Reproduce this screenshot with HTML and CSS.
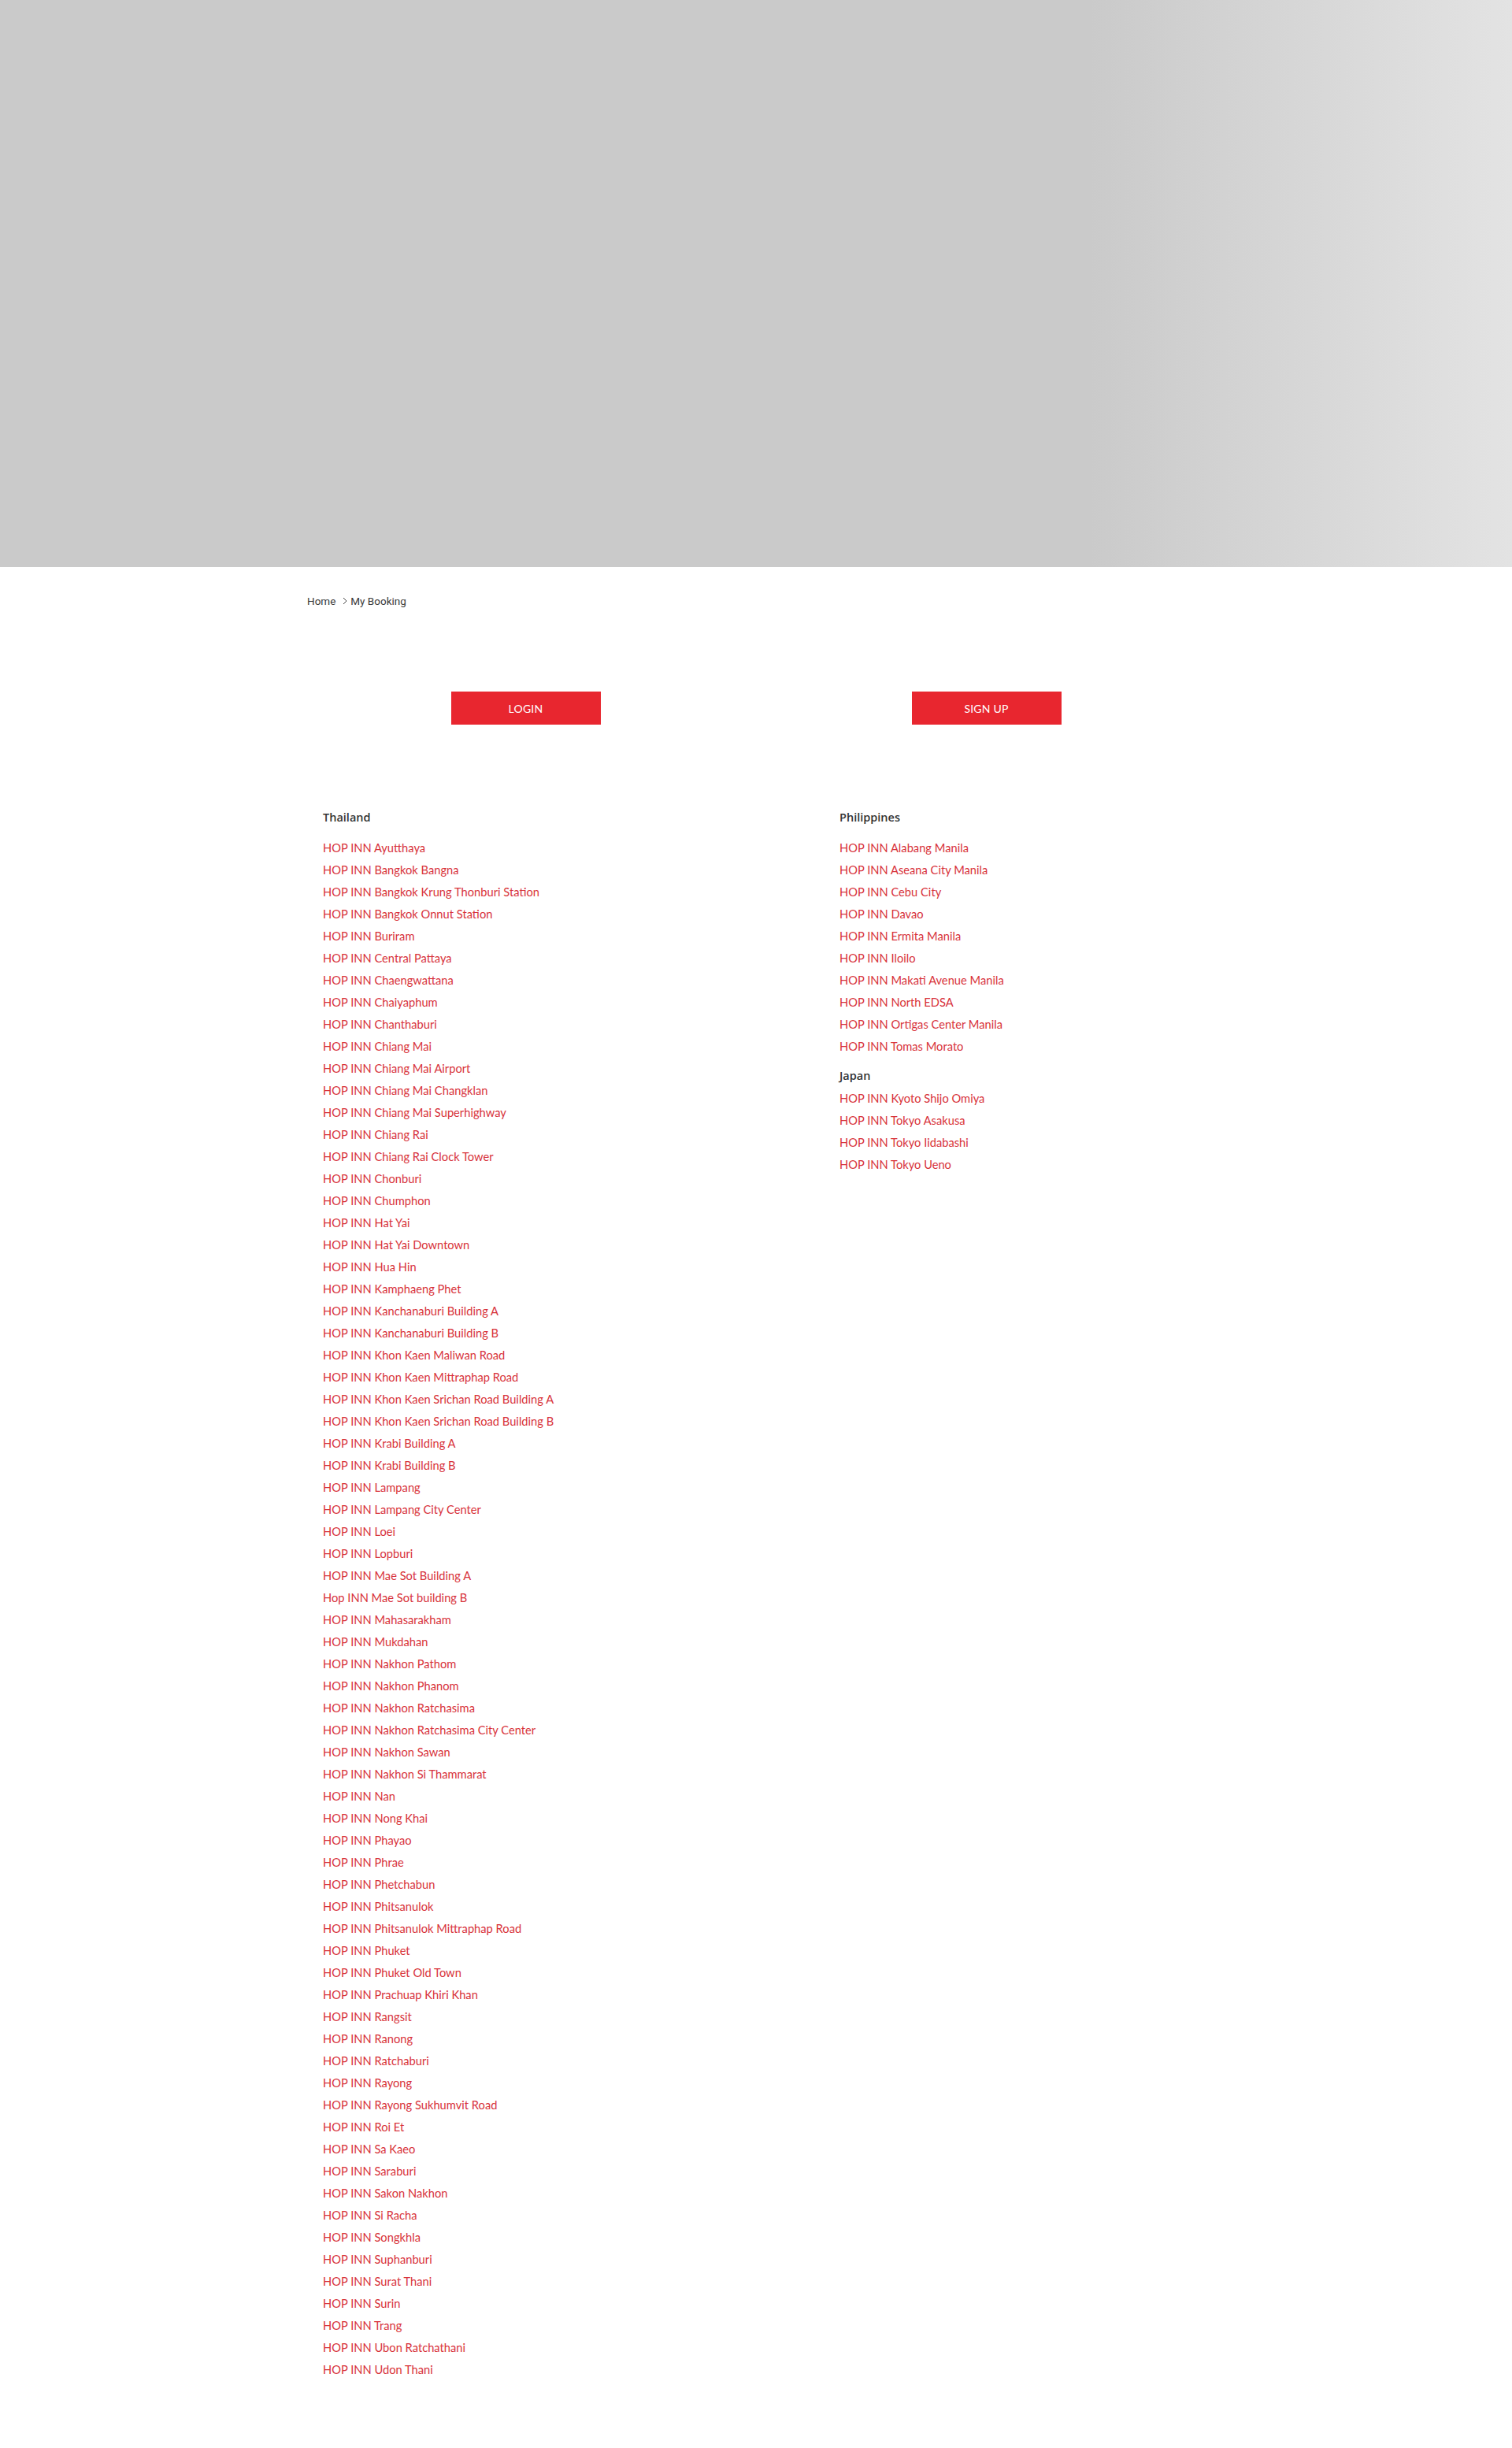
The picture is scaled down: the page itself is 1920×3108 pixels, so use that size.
FILE: index.html
```html
<!DOCTYPE html>
<html lang="en">
<head>
<meta charset="utf-8">
<title>My Booking - HOP INN</title>
<link rel="stylesheet" href="styles.css">
</head>
<body>
<header class="hero"></header>
<main class="container">
  <nav class="breadcrumb">
    <a href="#" class="crumb">Home</a>
    <svg class="chev" viewBox="0 0 6 10" width="6" height="10"><polyline points="1,1 5,5 1,9" fill="none" stroke="#444" stroke-width="1"/></svg>
    <span class="crumb current">My Booking</span>
  </nav>

  <section class="auth">
    <div class="auth-col"><a href="#" class="btn">LOGIN</a></div>
    <div class="auth-col"><a href="#" class="btn">SIGN UP</a></div>
  </section>

  <section class="hotels">
    <div class="region-col">
      <h4 class="region-title">Thailand</h4>
      <ul class="hotel-list">
        <li><a href="#">HOP INN Ayutthaya</a></li>
        <li><a href="#">HOP INN Bangkok Bangna</a></li>
        <li><a href="#">HOP INN Bangkok Krung Thonburi Station</a></li>
        <li><a href="#">HOP INN Bangkok Onnut Station</a></li>
        <li><a href="#">HOP INN Buriram</a></li>
        <li><a href="#">HOP INN Central Pattaya</a></li>
        <li><a href="#">HOP INN Chaengwattana</a></li>
        <li><a href="#">HOP INN Chaiyaphum</a></li>
        <li><a href="#">HOP INN Chanthaburi</a></li>
        <li><a href="#">HOP INN Chiang Mai</a></li>
        <li><a href="#">HOP INN Chiang Mai Airport</a></li>
        <li><a href="#">HOP INN Chiang Mai Changklan</a></li>
        <li><a href="#">HOP INN Chiang Mai Superhighway</a></li>
        <li><a href="#">HOP INN Chiang Rai</a></li>
        <li><a href="#">HOP INN Chiang Rai Clock Tower</a></li>
        <li><a href="#">HOP INN Chonburi</a></li>
        <li><a href="#">HOP INN Chumphon</a></li>
        <li><a href="#">HOP INN Hat Yai</a></li>
        <li><a href="#">HOP INN Hat Yai Downtown</a></li>
        <li><a href="#">HOP INN Hua Hin</a></li>
        <li><a href="#">HOP INN Kamphaeng Phet</a></li>
        <li><a href="#">HOP INN Kanchanaburi Building A</a></li>
        <li><a href="#">HOP INN Kanchanaburi Building B</a></li>
        <li><a href="#">HOP INN Khon Kaen Maliwan Road</a></li>
        <li><a href="#">HOP INN Khon Kaen Mittraphap Road</a></li>
        <li><a href="#">HOP INN Khon Kaen Srichan Road Building A</a></li>
        <li><a href="#">HOP INN Khon Kaen Srichan Road Building B</a></li>
        <li><a href="#">HOP INN Krabi Building A</a></li>
        <li><a href="#">HOP INN Krabi Building B</a></li>
        <li><a href="#">HOP INN Lampang</a></li>
        <li><a href="#">HOP INN Lampang City Center</a></li>
        <li><a href="#">HOP INN Loei</a></li>
        <li><a href="#">HOP INN Lopburi</a></li>
        <li><a href="#">HOP INN Mae Sot Building A</a></li>
        <li><a href="#">Hop INN Mae Sot building B</a></li>
        <li><a href="#">HOP INN Mahasarakham</a></li>
        <li><a href="#">HOP INN Mukdahan</a></li>
        <li><a href="#">HOP INN Nakhon Pathom</a></li>
        <li><a href="#">HOP INN Nakhon Phanom</a></li>
        <li><a href="#">HOP INN Nakhon Ratchasima</a></li>
        <li><a href="#">HOP INN Nakhon Ratchasima City Center</a></li>
        <li><a href="#">HOP INN Nakhon Sawan</a></li>
        <li><a href="#">HOP INN Nakhon Si Thammarat</a></li>
        <li><a href="#">HOP INN Nan</a></li>
        <li><a href="#">HOP INN Nong Khai</a></li>
        <li><a href="#">HOP INN Phayao</a></li>
        <li><a href="#">HOP INN Phrae</a></li>
        <li><a href="#">HOP INN Phetchabun</a></li>
        <li><a href="#">HOP INN Phitsanulok</a></li>
        <li><a href="#">HOP INN Phitsanulok Mittraphap Road</a></li>
        <li><a href="#">HOP INN Phuket</a></li>
        <li><a href="#">HOP INN Phuket Old Town</a></li>
        <li><a href="#">HOP INN Prachuap Khiri Khan</a></li>
        <li><a href="#">HOP INN Rangsit</a></li>
        <li><a href="#">HOP INN Ranong</a></li>
        <li><a href="#">HOP INN Ratchaburi</a></li>
        <li><a href="#">HOP INN Rayong</a></li>
        <li><a href="#">HOP INN Rayong Sukhumvit Road</a></li>
        <li><a href="#">HOP INN Roi Et</a></li>
        <li><a href="#">HOP INN Sa Kaeo</a></li>
        <li><a href="#">HOP INN Saraburi</a></li>
        <li><a href="#">HOP INN Sakon Nakhon</a></li>
        <li><a href="#">HOP INN Si Racha</a></li>
        <li><a href="#">HOP INN Songkhla</a></li>
        <li><a href="#">HOP INN Suphanburi</a></li>
        <li><a href="#">HOP INN Surat Thani</a></li>
        <li><a href="#">HOP INN Surin</a></li>
        <li><a href="#">HOP INN Trang</a></li>
        <li><a href="#">HOP INN Ubon Ratchathani</a></li>
        <li><a href="#">HOP INN Udon Thani</a></li>
      </ul>
    </div>
    <div class="region-col">
      <h4 class="region-title">Philippines</h4>
      <ul class="hotel-list">
        <li><a href="#">HOP INN Alabang Manila</a></li>
        <li><a href="#">HOP INN Aseana City Manila</a></li>
        <li><a href="#">HOP INN Cebu City</a></li>
        <li><a href="#">HOP INN Davao</a></li>
        <li><a href="#">HOP INN Ermita Manila</a></li>
        <li><a href="#">HOP INN Iloilo</a></li>
        <li><a href="#">HOP INN Makati Avenue Manila</a></li>
        <li><a href="#">HOP INN North EDSA</a></li>
        <li><a href="#">HOP INN Ortigas Center Manila</a></li>
        <li><a href="#">HOP INN Tomas Morato</a></li>
      </ul>
      <h4 class="region-title sub">Japan</h4>
      <ul class="hotel-list">
        <li><a href="#">HOP INN Kyoto Shijo Omiya</a></li>
        <li><a href="#">HOP INN Tokyo Asakusa</a></li>
        <li><a href="#">HOP INN Tokyo Iidabashi</a></li>
        <li><a href="#">HOP INN Tokyo Ueno</a></li>
      </ul>
    </div>
  </section>
</main>
</body>
</html>
```

FILE: styles.css
```css
* { box-sizing: border-box; }

html, body {
  margin: 0;
  padding: 0;
  background: #fff;
  font-family: "Lato", "Open Sans", "Liberation Sans", sans-serif;
  color: #333;
}

.hero {
  height: 720px;
  background: linear-gradient(to right, #cacaca 0%, #cacaca 72%, #e3e3e3 100%);
}

.container {
  width: 1140px;
  margin: 0 auto;
  padding-bottom: 84px;
}

.breadcrumb {
  display: flex;
  align-items: center;
  height: 20px;
  margin-top: 33px;
  font-family: "Roboto", "Liberation Sans", sans-serif;
  font-size: 13.5px;
  color: #3a3a3a;
}

.crumb {
  color: #3a3a3a;
  text-decoration: none;
}

.chev {
  margin: 0 4px 0 9px;
}

.auth {
  display: grid;
  grid-template-columns: 1fr 1fr;
  column-gap: 30px;
  margin-top: 105px;
}

.auth-col {
  display: flex;
  justify-content: center;
}

.btn {
  display: flex;
  align-items: center;
  justify-content: center;
  width: 190px;
  height: 42px;
  background: #e8262f;
  color: #fff;
  font-size: 14px;
  text-decoration: none;
  letter-spacing: 0.2px;
}

.hotels {
  display: grid;
  grid-template-columns: 656px 1fr;
  padding-left: 20px;
  margin-top: 108px;
}

.region-title {
  margin: 0 0 14px;
  font-family: "Open Sans", "Lato", sans-serif;
  font-size: 14.5px;
  line-height: 20px;
  font-weight: 600;
  color: #333;
}

.region-title.sub {
  margin: 14px 0 4px;
}

.hotel-list {
  list-style: none;
  margin: 0;
  padding: 0;
}

.hotel-list li {
  line-height: 28px;
  font-size: 14.7px;
}

.hotel-list a {
  color: #d8333b;
  text-decoration: none;
}
```
